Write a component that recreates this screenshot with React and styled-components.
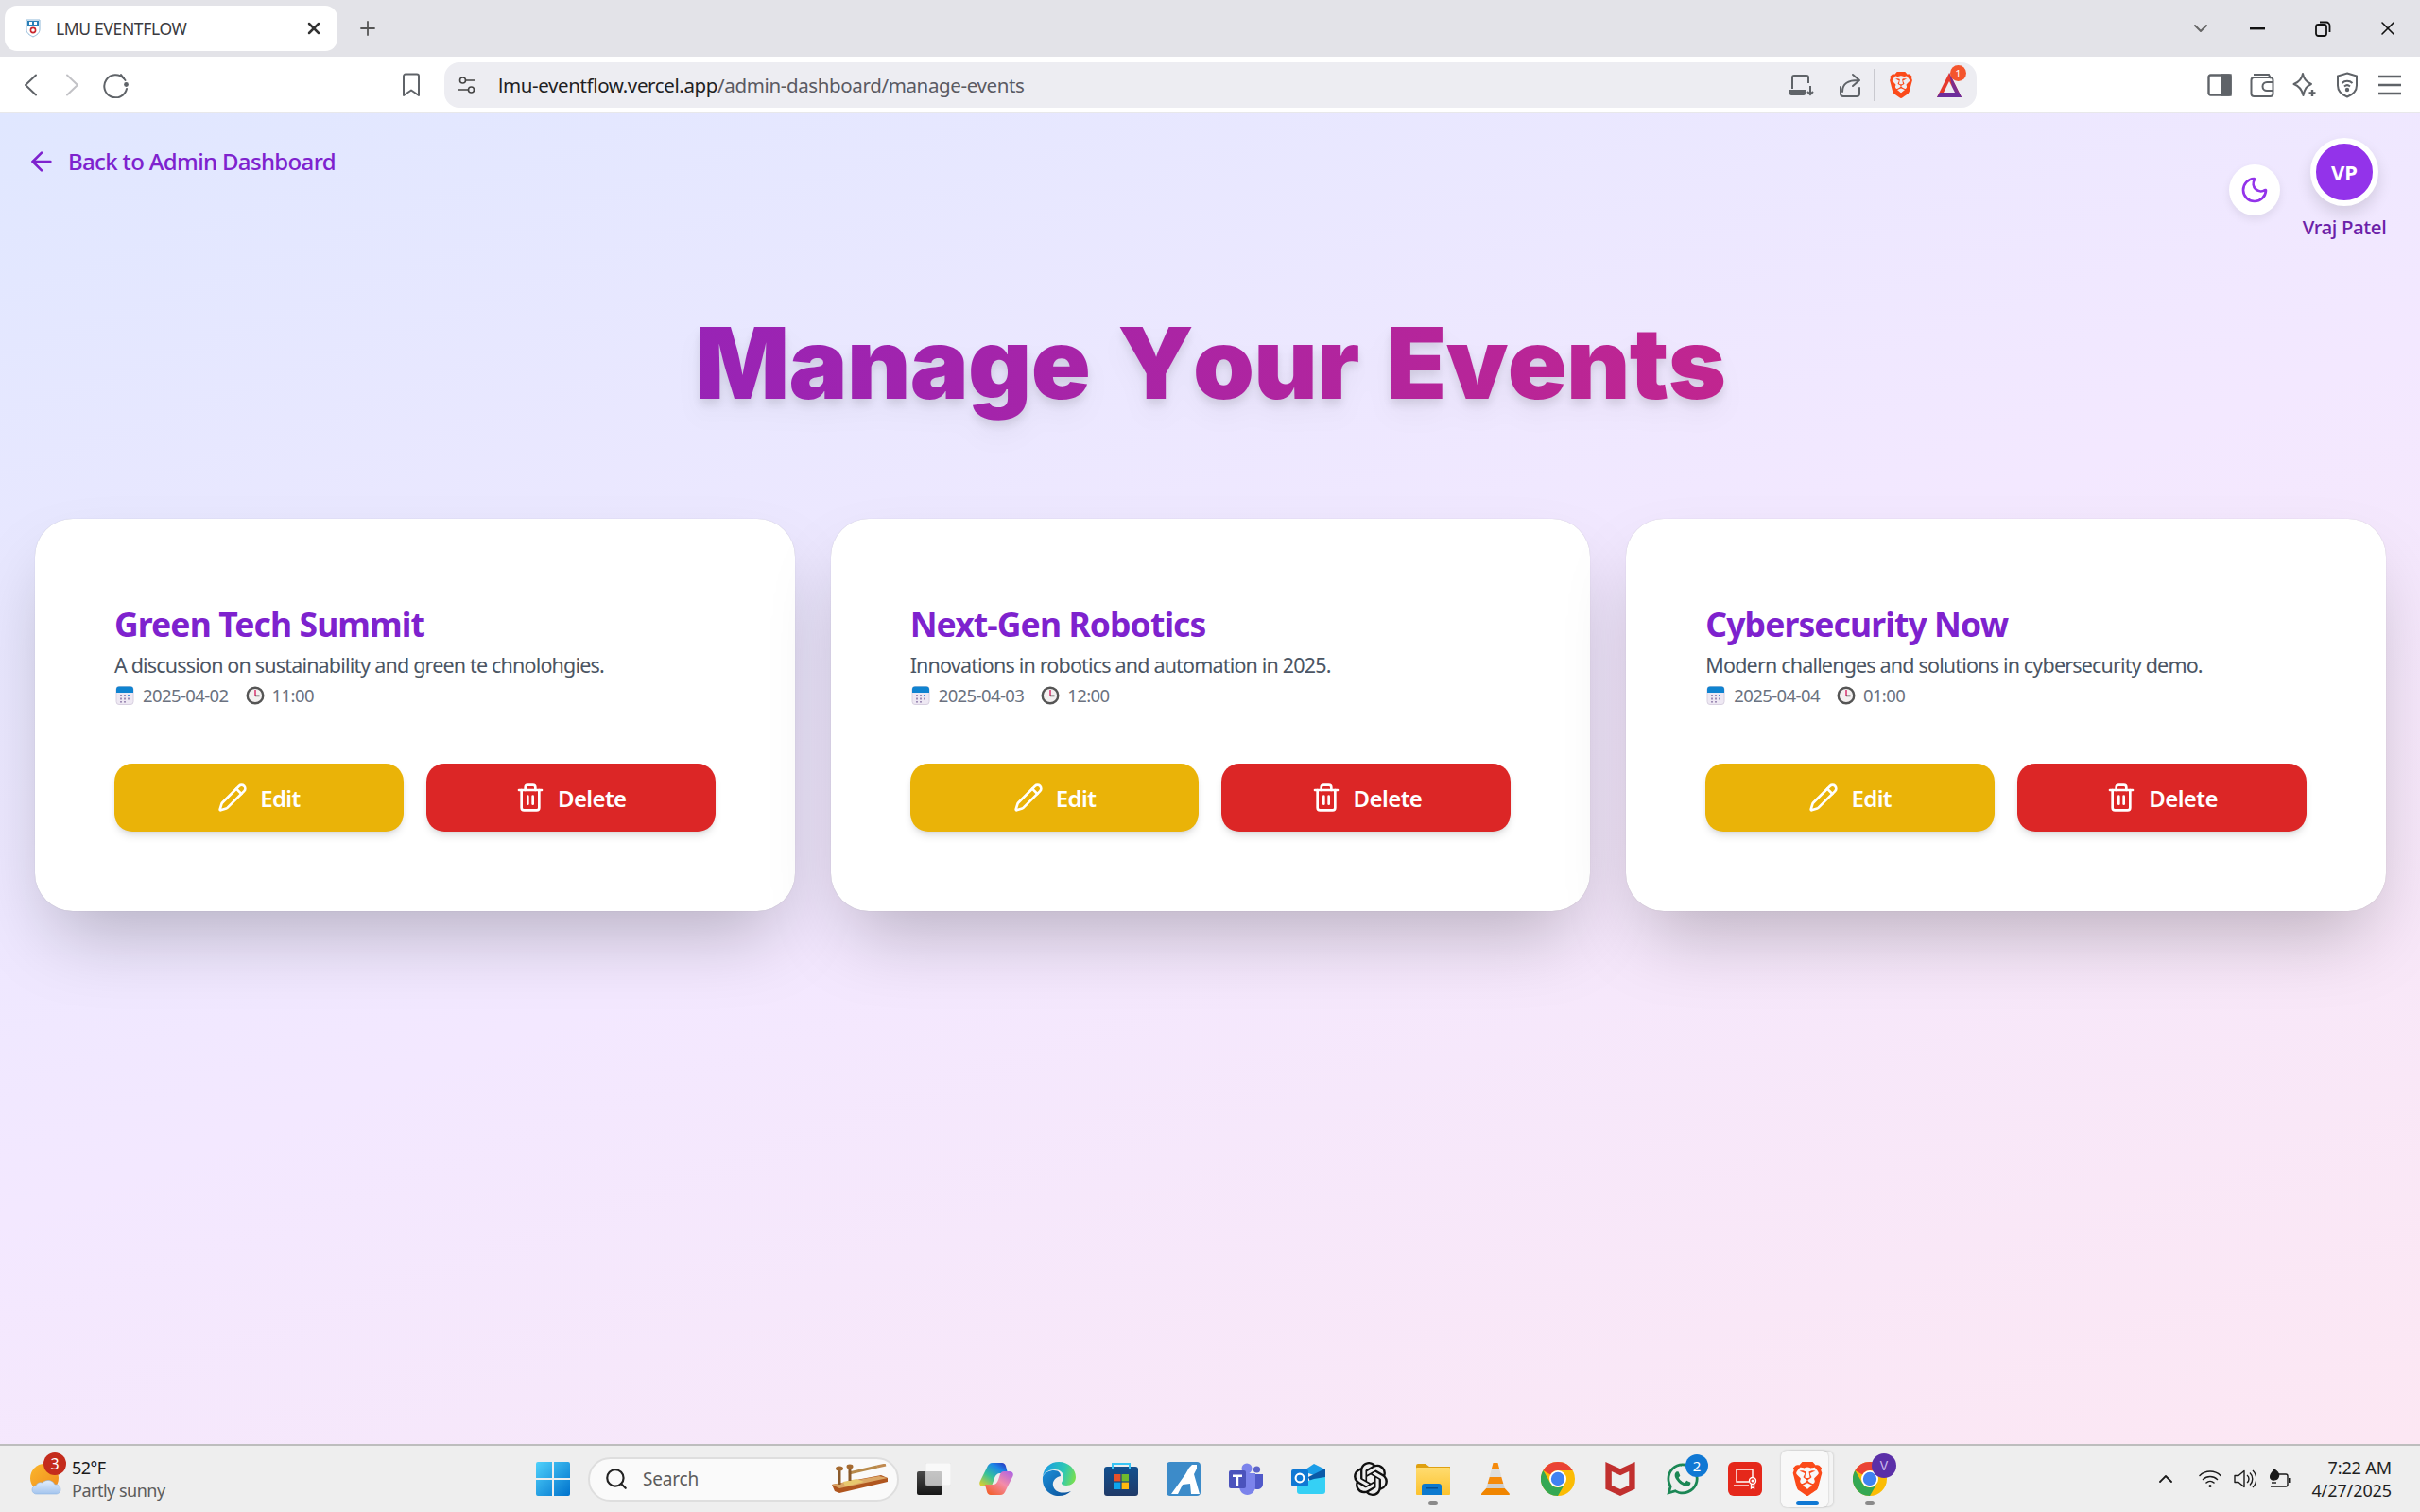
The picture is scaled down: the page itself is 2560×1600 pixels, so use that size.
import React from "react";
import styled, { createGlobalStyle } from "styled-components";
import { ArrowLeft, Moon, Pencil, Trash2, Plus, X, ChevronDown, ChevronUp, Search } from "lucide-react";
import { SiOpenai, SiBrave, SiMcafee } from "react-icons/si";
import { FaWhatsapp } from "react-icons/fa";

const Global = createGlobalStyle`
  html, body { margin: 0; padding: 0; height: 100%; }
  body { font-family: "Noto Sans", "Open Sans", sans-serif; }
  * { box-sizing: border-box; }
`;

const Shell = styled.div`
  width: 2560px; height: 1600px; display: flex; flex-direction: column; overflow: hidden;
`;

/* ---------- browser chrome ---------- */
const TabStrip = styled.div`
  height: 60px; background: #e3e3e8; display: flex; align-items: flex-start; padding: 6px 0 0 5px; color: #3c3c43;
`;
const Tab = styled.div`
  width: 352px; height: 48px; background: #fff; border-radius: 13px; display: flex; align-items: center; padding: 0 15px 0 22px;
`;
const TabTitle = styled.span`
  flex: 1; margin-left: 16px; font-size: 17.5px; color: #3a3a40; letter-spacing: -0.35px;
`;
const NewTab = styled.div`
  margin: 12px 0 0 20px; display: flex;
`;
const WindowControls = styled.div`
  margin-left: auto; display: flex; align-items: center; height: 48px; color: #111;
`;
const WinButton = styled.div`
  width: ${p => p.$w}px; display: flex; justify-content: center;
`;
const Toolbar = styled.div`
  height: 60px; background: #fff; display: flex; align-items: center; box-shadow: inset 0 -2px 0 #e8e8ea; color: #5f6368;
`;
const NavGroup = styled.div`
  width: 470px; flex: none; display: flex; align-items: center; padding-left: 25px;
`;
const NavBtn = styled.div`
  width: ${p => p.$w || 44}px; display: flex; justify-content: center; margin-left: ${p => p.$ml || 0}px;
`;
const UrlBar = styled.div`
  width: 1621px; height: 48px; border-radius: 16px; background: #ededf2; display: flex; align-items: center; padding: 0 14px 0 14px; position: relative;
`;
const UrlText = styled.div`
  margin-left: 23px; font-size: 20.5px; color: #1f1f24; flex: 1; letter-spacing: -0.37px;
`;
const UrlPath = styled.span`
  color: #5a5a62;
`;
const UrlIcons = styled.div`
  display: flex; align-items: center; color: #5f6368;
`;
const Divider = styled.div`
  width: 1px; height: 34px; background: #c9c9cf; margin: 0 14px 0 12px;
`;
const Badge = styled.span`
  position: absolute; top: ${p => p.$t}px; right: ${p => p.$r}px; width: ${p => p.$s}px; height: ${p => p.$s}px; border-radius: 50%;
  background: ${p => p.$bg}; color: ${p => p.$fg || "#fff"}; font-size: ${p => p.$f}px; display: flex; align-items: center; justify-content: center; line-height: 1;
`;
const IconWrap = styled.div`
  position: relative; display: flex; width: ${p => p.$w}px; justify-content: center; margin-left: ${p => p.$ml || 0}px;
`;
const ToolRight = styled.div`
  display: flex; align-items: center; margin-left: 234px;
`;
const ToolBtn = styled.div`
  width: 45px; display: flex; justify-content: center;
`;

/* ---------- page ---------- */
const Page = styled.main`
  flex: 1; background: linear-gradient(160deg, #e0e7ff, #f3e8ff 50%, #fce7f3); padding: 26px 36px 0 37px; min-height: 0;
`;
const TopRow = styled.div`
  display: flex; justify-content: space-between; align-items: flex-start;
`;
const BackLink = styled.a`
  display: flex; align-items: center; gap: 12px; margin: 6px 0 0 -9px; font-size: 24px; font-weight: 500; color: #7e22ce; letter-spacing: -0.65px; line-height: 38px;
`;
const UserArea = styled.div`
  display: flex; align-items: center; gap: 22px; margin-right: -2px;
`;
const ThemeBtn = styled.div`
  width: 54px; height: 54px; border-radius: 50%; background: #fff; display: flex; align-items: center; justify-content: center; color: #9333ea;
  box-shadow: 0 4px 10px rgba(0,0,0,.08);
`;
const UserBox = styled.div`
  display: flex; flex-direction: column; align-items: center; width: 92px;
`;
const Avatar = styled.div`
  width: 72px; height: 72px; border-radius: 50%; background: #9333ea; border: 6px solid #fff; color: #fff; font-weight: 700; font-size: 22px;
  display: flex; align-items: center; justify-content: center; box-shadow: 0 8px 16px rgba(0,0,0,.12);
`;
const UserName = styled.div`
  margin-top: 7px; font-size: 20.5px; font-weight: 500; color: #6b21a8; white-space: nowrap; line-height: 30px; letter-spacing: -0.4px;
`;
const Title = styled.h1`
  margin: 53px 0 0; text-align: center; font-family: "Inter", sans-serif; font-size: 104px; line-height: 152px; font-weight: 900; letter-spacing: -0.7px; word-spacing: 9px; font-kerning: none;
  background: linear-gradient(90deg, #7e22ce, #db2777); -webkit-background-clip: text; background-clip: text; color: transparent;
  filter: drop-shadow(0 16px 13px rgba(0,0,0,.04)) drop-shadow(0 6px 5px rgba(0,0,0,.1));
`;
const CardGrid = styled.div`
  margin-top: 89px; display: grid; grid-template-columns: repeat(3, 1fr); gap: 38px;
`;
const Card = styled.article`
  height: 415px; background: #fff; border-radius: 40px; padding: 84px 84px 0; box-shadow: 0 40px 80px -19px rgba(0,0,0,.25), 0 0 1px rgba(0,0,0,.2);
`;
const CardTitle = styled.h2`
  margin: 0; font-size: 35.5px; font-weight: 700; line-height: 54px; color: #7e22ce; letter-spacing: -0.9px;
`;
const CardDesc = styled.p`
  margin: 0; font-size: 21.5px; line-height: 34px; color: #4b5563; letter-spacing: -0.82px;
`;
const Meta = styled.div`
  display: flex; align-items: center; font-size: 18.5px; line-height: 28px; color: #6b7280; letter-spacing: -0.6px; margin-top: 1px;
`;
const MetaText = styled.span`
  margin: 0 ${p => p.$mr || 0}px 0 8px;
`;
const Actions = styled.div`
  margin-top: 58px; display: grid; grid-template-columns: 1fr 1fr; gap: 24px;
`;
const ActionBtn = styled.button`
  height: 72px; border: 0; border-radius: 19px; background: ${p => p.$bg}; color: #fff; font-family: inherit; font-size: 24px; font-weight: 600; letter-spacing: -0.6px;
  display: flex; align-items: center; justify-content: center; gap: 13px; box-shadow: 0 6px 10px -2px rgba(0,0,0,.12), 0 3px 6px -3px rgba(0,0,0,.1);
`;

/* ---------- taskbar ---------- */
const Taskbar = styled.footer`
  height: 72px; flex: none; background: #eeeeee; border-top: 2px solid #bdbdbd; display: flex; align-items: center; position: relative;
`;
const Weather = styled.div`
  width: 552px; flex: none; display: flex; align-items: center; padding-left: 32px; height: 100%;
`;
const WeatherIcon = styled.div`
  position: relative; width: 44px; height: 36px; flex: none;
`;
const WeatherText = styled.div`
  display: flex; flex-direction: column; font-size: 18px; line-height: 24px; color: #1a1a1a; letter-spacing: -0.5px;
`;
const WeatherSub = styled.span`
  color: #5c5c5c;
`;
const TaskGroup = styled.div`
  display: flex; align-items: center; height: 100%;
`;
const TaskItem = styled.div`
  position: relative; width: 66px; height: 100%; display: flex; align-items: center; justify-content: center; flex: none;
`;
const ActiveBack = styled.div`
  position: absolute; left: 5px; right: 11px; top: 5px; bottom: 5px; background: #f8f8f8; border-radius: 6px; box-shadow: 0 0 2px rgba(0,0,0,.25), 6px 0 0 -1px #f4f4f4, 6px 0 2px 0 rgba(0,0,0,.1);
`;
const RunDot = styled.span`
  position: absolute; bottom: 7px; left: 50%; transform: translateX(-50%); width: ${p => p.$w || 10}px; height: 5px; border-radius: 3px; background: ${p => p.$c || "#8a8a8a"};
`;
const SearchBox = styled.div`
  width: 329px; height: 47px; flex: none; margin: 0 4px; border-radius: 24px; background: #fafafa; border: 2px solid #dedede; display: flex; align-items: center; padding: 0 9px 0 15px;
  color: #5c5c5c; font-size: 19px; gap: 15px; letter-spacing: -0.2px;
`;
const SearchLabel = styled.span`
  flex: 1;
`;
const Tray = styled.div`
  margin-left: auto; display: flex; align-items: center; height: 100%; color: #1a1a1a; padding-right: 30px;
`;
const TrayItem = styled.div`
  width: ${p => p.$w}px; display: flex; justify-content: center; margin-left: ${p => p.$ml || 0}px;
`;
const Clock = styled.div`
  margin-left: 5px; width: 90px; text-align: right; font-size: 18px; line-height: 24px; color: #1f1f1f; letter-spacing: -0.1px;
`;

/* ---------- drawn icons ---------- */
const Favicon = () => (
  <svg width="16" height="20" viewBox="0 0 16 20"><path d="M1 1h14v10c0 4-3 6-7 8-4-2-7-4-7-8z" fill="#fff" stroke="#8fb8d8" /><rect x="2" y="2" width="12" height="6" fill="#2a7fb8" /><rect x="4" y="3" width="3" height="3" fill="#fff" /><rect x="9" y="3" width="3" height="3" fill="#fff" /><circle cx="8" cy="12" r="2.6" fill="none" stroke="#c9252c" strokeWidth="1.6" /></svg>
);
const Chevron = ({ dir, color }) => (
  <svg width="15" height="24" viewBox="0 0 15 24" fill="none" stroke={color} strokeWidth="2" strokeLinecap="round" strokeLinejoin="round"><path d={dir === "left" ? "M13 1.500L2 12l11 10.500" : "M2 1.500L13 12 2 22.500"} /></svg>
);
const Reload = () => (
  <svg width="27" height="27" viewBox="0 0 27 27" fill="none" stroke="#5f6368" strokeWidth="2" strokeLinecap="round"><path d="M22 6A12 12 0 1 0 25 17" /><circle cx="24.500" cy="12.500" r="2.400" fill="#5f6368" stroke="none" /><path d="M19 2l4.500 6" /></svg>
);
const Bookmark = () => (
  <svg width="20" height="26" viewBox="0 0 20 26" fill="none" stroke="#5f6368" strokeWidth="2" strokeLinejoin="round"><path d="M2 3.5a2 2 0 0 1 2-2h12a2 2 0 0 1 2 2V24l-8-5.5L2 24z" /></svg>
);
const Sliders = () => (
  <svg width="20" height="20" viewBox="0 0 20 20" fill="none" stroke="#444" strokeWidth="1.6"><circle cx="5.5" cy="5" r="3" /><path d="M9 5h10M1 15h10" /><circle cx="14.5" cy="15" r="3" /></svg>
);
const InstallIcon = () => (
  <svg width="26" height="24" viewBox="0 0 26 24" fill="none" stroke="#5f6368" strokeWidth="2"><path d="M3 16V4a2 2 0 0 1 2-2h13a2 2 0 0 1 2 2v6" /><path d="M1 18h15v3a1 1 0 0 1-1 1H2a1 1 0 0 1-1-1z" fill="#5f6368" /><path d="M22 13v9M19 19l3 3 3-3" /></svg>
);
const ShareIcon = () => (
  <svg width="24" height="26" viewBox="0 0 24 26" fill="none" stroke="#5f6368" strokeWidth="2" strokeLinecap="round" strokeLinejoin="round"><path d="M22 16v6a3 3 0 0 1-3 3H5a3 3 0 0 1-3-3v-7" /><path d="M4 20c0-9 6-12 17-12M15 2l7 6-7 6" /></svg>
);
const BraveTri = () => (
  <svg width="28" height="28" viewBox="0 0 28 28"><path d="M14 1L1 27h26z" fill="#e63a2e" /><path d="M14 1l13 26h-8z" fill="#7b2d8e" /><path d="M14 10L7 24h14z" fill="#ededf2" /><path d="M4 22h20l3 5H1z" fill="#6c2d9c" /></svg>
);
const SidebarIcon = () => (
  <svg width="26" height="24" viewBox="0 0 26 24" fill="none" stroke="#5f6368" strokeWidth="2.4"><rect x="1.5" y="1.5" width="23" height="21" rx="2" /><rect x="16" y="1.5" width="8.5" height="21" fill="#5f6368" /></svg>
);
const WalletIcon = () => (
  <svg width="26" height="26" viewBox="0 0 26 26" fill="none" stroke="#5f6368" strokeWidth="2"><path d="M4 2h16l2 4" /><rect x="1.5" y="5" width="23" height="20" rx="3" /><path d="M25 10h-7a3.5 3.5 0 0 0 0 9h7" /></svg>
);
const LeoIcon = () => (
  <svg width="28" height="28" viewBox="0 0 28 28" fill="none" stroke="#5f6368" strokeWidth="2" strokeLinejoin="round"><path d="M12 2c1 6 4 9 9 11-5 2-7 5-8.500 12C11 18 8 15 2.500 13 8 11 11 8 12 2z" /><path d="M22 19v7M18.500 22.500h7" strokeWidth="2.400" /></svg>
);
const VpnIcon = () => (
  <svg width="24" height="28" viewBox="0 0 24 28" fill="none" stroke="#5f6368" strokeWidth="2"><path d="M12 1.500l10 3v10c0 6-5 10-10 12-5-2-10-6-10-12v-10z" /><path d="M6.500 12a8 8 0 0 1 11 0M9 15.500a4.500 4.500 0 0 1 6 0" /><circle cx="12" cy="19" r="1.200" fill="#5f6368" /></svg>
);
const MenuIcon = () => (
  <svg width="26" height="22" viewBox="0 0 26 22" stroke="#5f6368" strokeWidth="2.400"><path d="M1 2h24M1 11h24M1 20h24" /></svg>
);
const RestoreIcon = () => (
  <svg width="17" height="17" viewBox="0 0 17 17" fill="none" stroke="#111" strokeWidth="1.800"><rect x="1" y="4" width="11" height="12" rx="2.500" /><path d="M5 1.500h7a3.500 3.500 0 0 1 3.500 3.500v7" /></svg>
);
const MinIcon = () => (
  <svg width="16" height="4" viewBox="0 0 16 4"><rect width="16" height="2.400" y="1" fill="#111" /></svg>
);
const Calendar = () => (
  <svg width="22" height="22" viewBox="0 0 22 22"><rect x="2" y="1.500" width="18" height="19" rx="3" fill="#eee8f3" stroke="#d8d0e0" /><path d="M2 8V4.500a3 3 0 0 1 3-3h12a3 3 0 0 1 3 3V8z" fill="#0f83d0" /><g fill="#9d8bb5"><rect x="6" y="10" width="2" height="2" /><rect x="10" y="10" width="2" height="2" /><rect x="14" y="10" width="2" height="2" fill="#4a90d9" /><rect x="6" y="13.500" width="2" height="2" /><rect x="10" y="13.500" width="2" height="2" /><rect x="14" y="13.500" width="2" height="2" /><rect x="6" y="17" width="2" height="1.600" /><rect x="10" y="17" width="2" height="1.600" /></g></svg>
);
const ClockEmoji = () => (
  <svg width="20" height="20" viewBox="0 0 20 20"><circle cx="10" cy="10" r="8.300" fill="#f3f0f0" stroke="#555" strokeWidth="2.400" /><path d="M10 4v6" stroke="#d8336f" strokeWidth="1.500" /><path d="M10 10.400h4.500" stroke="#222" strokeWidth="1.500" /></svg>
);

const WeatherArt = () => (
  <svg width="34" height="36" viewBox="0 0 34 36"><defs><linearGradient id="sun" x1="0" y1="0" x2="1" y2="1"><stop offset="0" stopColor="#fbb72c" /><stop offset="1" stopColor="#ef8a1e" /></linearGradient><linearGradient id="cl" x1="0" y1="0" x2="0" y2="1"><stop offset="0" stopColor="#e3eefb" /><stop offset="1" stopColor="#a3c4ee" /></linearGradient></defs><circle cx="15" cy="17" r="15" fill="url(#sun)" /><path d="M7 34a4.500 4.500 0 0 1-1-9 6 6 0 0 1 7-3 8 8 0 0 1 13 2 5 5 0 0 1 6 5 5 5 0 0 1-4 5z" fill="url(#cl)" stroke="#8fb5e3" strokeWidth=".6" /></svg>
);
const StartIcon = () => (
  <svg width="36" height="36" viewBox="0 0 36 36"><defs><linearGradient id="st" x1="0" y1="0" x2="1" y2="1"><stop offset="0" stopColor="#4fd1fb" /><stop offset="1" stopColor="#0072cc" /></linearGradient></defs><path d="M0 2a2 2 0 0 1 2-2h15v17H0zM19 0h15a2 2 0 0 1 2 2v15H19zM0 19h17v17H2a2 2 0 0 1-2-2zM19 19h17v15a2 2 0 0 1-2 2H19z" fill="url(#st)" /></svg>
);
const SearchArt = () => (
  <svg width="60" height="32" viewBox="0 0 60 32"><path d="M0 22l52-10 7 3v4L8 31l-5-2z" fill="#b0561f" /><path d="M0 22l50-9 9 2-51 11z" fill="#dba766" /><path d="M14 24l20-5-8-3-14 3z" fill="#e8c96e" /><path d="M18 10l30-7" stroke="#b88a4a" strokeWidth="3" fill="none" /><path d="M8 6v16M19 4v14" stroke="#8a5a2b" strokeWidth="3" fill="none" /><ellipse cx="8" cy="5" rx="4" ry="2.500" fill="#a56a30" /><ellipse cx="19" cy="3" rx="3.500" ry="2.400" fill="#a56a30" /><path d="M48 3l9-2" stroke="#c08a50" strokeWidth="3" /></svg>
);
const TaskViewIcon = () => (
  <svg width="36" height="34" viewBox="0 0 36 34"><defs><linearGradient id="tv" x1="0" y1="0" x2="0" y2="1"><stop offset="0" stopColor="#4a4a4a" /><stop offset="1" stopColor="#161616" /></linearGradient></defs><rect x="0" y="9" width="27" height="25" rx="2" fill="url(#tv)" /><rect x="9" y="0" width="27" height="24" rx="2" fill="#fff" opacity=".68" stroke="#ddd" strokeWidth=".6" /></svg>
);
const CopilotIcon = () => (
  <svg width="36" height="34" viewBox="0 0 36 34"><defs><linearGradient id="co1" x1="0" y1="1" x2=".8" y2="0"><stop offset="0" stopColor="#f5d020" /><stop offset=".45" stopColor="#35c29a" /><stop offset=".8" stopColor="#1b86e8" /><stop offset="1" stopColor="#2746c8" /></linearGradient><linearGradient id="co2" x1=".2" y1="1" x2="1" y2="0"><stop offset="0" stopColor="#f2602f" /><stop offset=".5" stopColor="#f48ca8" /><stop offset="1" stopColor="#a860e8" /></linearGradient></defs><path d="M14 0h10c2 0 3.500 1.500 4 3.500L30 11h-8c-3 0-5 2-6 5l-2 6c-1 2-2 3-4 3H4c-3 0-4.500-2-3.500-5L8 5c1-3 3-5 6-5z" fill="url(#co1)" /><path d="M22 34H12c-2 0-3.500-1.500-4-3.500L6 23h8c3 0 5-2 6-5l2-6c1-2 2-3 4-3h6c3 0 4.500 2 3.500 5L28 29c-1 3-3 5-6 5z" fill="url(#co2)" /></svg>
);
const EdgeIcon = () => (
  <svg width="36" height="36" viewBox="0 0 36 36"><defs><linearGradient id="ed1" x1="0" y1=".5" x2="1" y2=".7"><stop offset="0" stopColor="#1b9de2" /><stop offset=".6" stopColor="#2dc8b4" /><stop offset="1" stopColor="#7de04a" /></linearGradient><linearGradient id="ed2" x1="0" y1="0" x2="1" y2="1"><stop offset="0" stopColor="#1b8fd8" /><stop offset="1" stopColor="#0c4f98" /></linearGradient></defs><path d="M1 16C2 6 9 0 18 0c11 0 18 8 18 16 0 6-5 9-10 9-3 0-5-1-5-2.500 0-1.500 2-2.500 2-6.500 0-5-4-8-9-8-6 0-12 3-13 8z" fill="url(#ed1)" /><path d="M1 16c2-5 7-7 12-7s7 3 7 6c-5 1-9 5-8 10 1 6 8 10 19 6-3 3-8 5-13 5C8 36 0 28 1 16z" fill="url(#ed2)" /></svg>
);
const StoreIcon = () => (
  <svg width="36" height="36" viewBox="0 0 36 36"><defs><linearGradient id="sb" x1="0" y1="0" x2="0" y2="1"><stop offset="0" stopColor="#12508f" /><stop offset="1" stopColor="#203a68" /></linearGradient></defs><rect y="5" width="36" height="31" rx="3" fill="url(#sb)" /><path d="M9 8V2h18v6" fill="none" stroke="#38c4f4" strokeWidth="2" /><rect x="10" y="13" width="7.400" height="7.400" fill="#e8512a" /><rect x="18.600" y="13" width="7.400" height="7.400" fill="#6fb92d" /><rect x="10" y="21.600" width="7.400" height="7.400" fill="#0ea5ee" /><rect x="18.600" y="21.600" width="7.400" height="7.400" fill="#fdb90f" /></svg>
);
const AppAIcon = () => (
  <svg width="36" height="36" viewBox="0 0 36 36"><rect width="36" height="36" rx="4" fill="#3c8bc9" /><path d="M5 34L20 13l4-7 3-3h5v4l-3 6 6 21H26l-1-11-8 1-5 10z" fill="#fff" /></svg>
);
const TeamsIcon = () => (
  <svg width="36" height="34" viewBox="0 0 36 34"><circle cx="29.500" cy="7" r="3.600" fill="#5b62c8" /><circle cx="19" cy="6" r="5.500" fill="#7b83eb" /><path d="M24 12h12v10c0 4-3 6-6 6s-6-2-6-6z" fill="#5059c9" /><path d="M11 11h17v14c0 5-4 9-8.500 9S11 30 11 25z" fill="#7b83eb" /><rect y="8" width="18" height="19" rx="2" fill="#4b53bc" /><path d="M4 12.500h10v2.400h-3.800V24H7.800v-9.100H4z" fill="#fff" /></svg>
);
const OutlookIcon = () => (
  <svg width="36" height="32" viewBox="0 0 36 32"><path d="M12 8L24 0l12 6v10z" fill="#1a9de8" /><path d="M18 14L36 5v9L22 24z" fill="#0a5aa8" /><path d="M6 22l18-6 12-2v15a3 3 0 0 1-3 3H9a3 3 0 0 1-3-3z" fill="#35d0f5" /><rect y="6" width="18" height="18" rx="2" fill="#0f78d4" /><circle cx="9" cy="15" r="4.400" fill="none" stroke="#fff" strokeWidth="2.100" /></svg>
);
const FolderIcon = () => (
  <svg width="36" height="33" viewBox="0 0 36 33"><defs><linearGradient id="fo" x1="0" y1="0" x2="0" y2="1"><stop offset="0" stopColor="#ffdc70" /><stop offset="1" stopColor="#fcc22e" /></linearGradient></defs><path d="M0 6V2a2 2 0 0 1 2-2h8l4 3h22v3z" fill="#dfa010" /><rect y="4" width="36" height="29" rx="1" fill="url(#fo)" /><path d="M6 33V24a3 3 0 0 1 3-3h15a3 3 0 0 1 3 3v9z" fill="#0c79cf" /><rect x="10" y="25" width="13" height="1.500" fill="#084f8f" /></svg>
);
const VlcIcon = () => (
  <svg width="30" height="34" viewBox="0 0 30 34"><path d="M12.500 0h5l1.800 7h-8.600z" fill="#f58a0b" /><path d="M10.700 7h8.600l2 8H8.700z" fill="#dedede" /><path d="M8.700 15h12.600l2 7H6.700z" fill="#f58a0b" /><path d="M6.700 22h16.600l1.500 5H5.200z" fill="#cfcfcf" /><path d="M5.200 27h19.600l5 5.500V34H0v-1.500z" fill="#f08500" /></svg>
);
const ChromeIcon = () => (
  <svg width="36" height="36" viewBox="0 0 36 36"><circle cx="18" cy="18" r="18" fill="#fbbc04" /><path d="M2.410 9A18 18 0 0 1 33.590 9H18a9 9 0 0 0-7.800 4.500z" fill="#ea4335" /><path d="M2.410 9A18 18 0 0 0 18 36l7.800-13.500A9 9 0 0 1 10.200 22.500z" fill="#34a853" /><circle cx="18" cy="18" r="9" fill="#fff" /><circle cx="18" cy="18" r="7.200" fill="#3f82f1" /></svg>
);
const RedApp = () => (
  <svg width="36" height="36" viewBox="0 0 36 36"><rect width="36" height="36" rx="6" fill="#e5281b" /><g fill="none" stroke="#fff" strokeWidth="1.400"><path d="M22 21H9V8h17v8" /><path d="M6 25h16" /><circle cx="26" cy="20" r="3.500" /><path d="M24.500 23.500V28l1.500-1 1.500 1v-4.500" /></g><circle cx="26" cy="20" r="1.500" fill="#fff" /></svg>
);
const BraveMark = ({ size }) => (
  <SiBrave size={size} color="#fb4a1a" />
);
const Wifi = () => (
  <svg width="24" height="20" viewBox="0 0 24 20" fill="none" stroke="#1a1a1a" strokeWidth="1.500" strokeLinecap="round"><path d="M1 6.500a16 16 0 0 1 22 0M4.500 10.500a11 11 0 0 1 15 0M8 14a6 6 0 0 1 8 0" /><circle cx="12" cy="17.500" r="1.500" fill="#1a1a1a" stroke="none" /></svg>
);
const Speaker = () => (
  <svg width="24" height="22" viewBox="0 0 24 22" fill="none" stroke="#1a1a1a" strokeWidth="1.400" strokeLinejoin="round"><path d="M1 7.500h4l6-5v17l-6-5H1z" /><path d="M14 7a5 5 0 0 1 0 8M17 4.500a9 9 0 0 1 0 13M20 2a12.500 12.500 0 0 1 0 18" /></svg>
);
const Battery = () => (
  <svg width="24" height="22" viewBox="0 0 24 22" fill="none" stroke="#1a1a1a" strokeWidth="1.400"><path d="M8 6h10a2 2 0 0 1 2 2v9a2 2 0 0 1-2 2H2" /><rect x="21" y="10" width="2.500" height="5" fill="#1a1a1a" stroke="none" /><path d="M6 1c3 2 5 4 4.500 7-.5 3-3 4-5.500 4S1 10 2 7 5 3 6 1z" fill="#1a1a1a" /><path d="M3 15h5" /></svg>
);

const events = [
  { title: "Green Tech Summit", desc: "A discussion on sustainability and green te chnolohgies.", date: "2025-04-02", time: "11:00" },
  { title: "Next-Gen Robotics", desc: "Innovations in robotics and automation in 2025.", date: "2025-04-03", time: "12:00" },
  { title: "Cybersecurity Now", desc: "Modern challenges and solutions in cybersecurity demo.", date: "2025-04-04", time: "01:00" },
];

export default function App() {
  return (
    <Shell>
      <Global />
      <TabStrip>
        <Tab>
          <Favicon />
          <TabTitle>LMU EVENTFLOW</TabTitle>
          <X size={20} strokeWidth={3} color="#333" />
        </Tab>
        <NewTab><Plus size={24} strokeWidth={1.8} color="#555" /></NewTab>
        <WindowControls>
          <WinButton $w={52}><ChevronDown size={24} color="#666" strokeWidth={2} /></WinButton>
          <WinButton $w={68}><MinIcon /></WinButton>
          <WinButton $w={70}><RestoreIcon /></WinButton>
          <WinButton $w={68}><X size={24} strokeWidth={1.6} /></WinButton>
        </WindowControls>
      </TabStrip>
      <Toolbar>
        <NavGroup>
          <NavBtn $w={15}><Chevron dir="left" color="#5f6368" /></NavBtn>
          <NavBtn $ml={29} $w={15}><Chevron dir="right" color="#c2c2c6" /></NavBtn>
          <NavBtn $ml={25} $w={27}><Reload /></NavBtn>
          <NavBtn $ml={289} $w={20}><Bookmark /></NavBtn>
        </NavGroup>
        <UrlBar>
          <Sliders />
          <UrlText>lmu-eventflow.vercel.app<UrlPath>/admin-dashboard/manage-events</UrlPath></UrlText>
          <UrlIcons>
            <IconWrap $w={30}><InstallIcon /></IconWrap>
            <IconWrap $w={26} $ml={23}><ShareIcon /></IconWrap>
            <Divider />
            <IconWrap $w={28}><BraveMark size={28} /></IconWrap>
            <IconWrap $w={30} $ml={22}>
              <BraveTri />
              <Badge $t={-7} $r={-3} $s={17} $bg="#f4552d" $f={11}>1</Badge>
            </IconWrap>
          </UrlIcons>
        </UrlBar>
        <ToolRight>
          <ToolBtn><SidebarIcon /></ToolBtn>
          <ToolBtn><WalletIcon /></ToolBtn>
          <ToolBtn><LeoIcon /></ToolBtn>
          <ToolBtn><VpnIcon /></ToolBtn>
          <ToolBtn><MenuIcon /></ToolBtn>
        </ToolRight>
      </Toolbar>
      <Page>
        <TopRow>
          <BackLink><ArrowLeft size={32} strokeWidth={2} />Back to Admin Dashboard</BackLink>
          <UserArea>
            <ThemeBtn><Moon size={32} strokeWidth={2} /></ThemeBtn>
            <UserBox>
              <Avatar>VP</Avatar>
              <UserName>Vraj Patel</UserName>
            </UserBox>
          </UserArea>
        </TopRow>
        <Title>Manage Your Events</Title>
        <CardGrid>
          {events.map(e => (
            <Card key={e.title}>
              <CardTitle>{e.title}</CardTitle>
              <CardDesc>{e.desc}</CardDesc>
              <Meta>
                <Calendar /><MetaText $mr={18}>{e.date}</MetaText>
                <ClockEmoji /><MetaText>{e.time}</MetaText>
              </Meta>
              <Actions>
                <ActionBtn $bg="#eab308"><Pencil size={32} strokeWidth={2} />Edit</ActionBtn>
                <ActionBtn $bg="#dc2626"><Trash2 size={32} strokeWidth={2} />Delete</ActionBtn>
              </Actions>
            </Card>
          ))}
        </CardGrid>
      </Page>
      <Taskbar>
        <Weather>
          <WeatherIcon>
            <WeatherArt />
            <Badge $t={-10} $r={6} $s={24} $bg="#c42b1c" $f={16}>3</Badge>
          </WeatherIcon>
          <WeatherText>52°F<WeatherSub>Partly sunny</WeatherSub></WeatherText>
        </Weather>
        <TaskGroup>
          <TaskItem><StartIcon /></TaskItem>
          <SearchBox><Search size={26} color="#222" strokeWidth={2} /><SearchLabel>Search</SearchLabel><SearchArt /></SearchBox>
          <TaskItem><TaskViewIcon /></TaskItem>
          <TaskItem><CopilotIcon /></TaskItem>
          <TaskItem><EdgeIcon /></TaskItem>
          <TaskItem><StoreIcon /></TaskItem>
          <TaskItem><AppAIcon /></TaskItem>
          <TaskItem><TeamsIcon /></TaskItem>
          <TaskItem><OutlookIcon /></TaskItem>
          <TaskItem><SiOpenai size={36} color="#111" /></TaskItem>
          <TaskItem><FolderIcon /><RunDot /></TaskItem>
          <TaskItem><VlcIcon /></TaskItem>
          <TaskItem><ChromeIcon /></TaskItem>
          <TaskItem><SiMcafee size={36} color="#c1302f" /></TaskItem>
          <TaskItem><FaWhatsapp size={38} color="#1b8755" /><Badge $t={9} $r={6} $s={24} $bg="#0f78d4" $f={15}>2</Badge></TaskItem>
          <TaskItem><RedApp /></TaskItem>
          <TaskItem><ActiveBack /><IconWrap $w={38}><BraveMark size={36} /></IconWrap><RunDot $w={24} $c="#0f78d4" /></TaskItem>
          <TaskItem><ChromeIcon /><Badge $t={8} $r={5} $s={26} $bg="#5b2fa8" $fg="#c9b8ee" $f={14}>V</Badge><RunDot /></TaskItem>
        </TaskGroup>
        <Tray>
          <TrayItem $w={34}><ChevronUp size={24} strokeWidth={1.8} /></TrayItem>
          <TrayItem $w={46} $ml={7}><Wifi /></TrayItem>
          <TrayItem $w={28}><Speaker /></TrayItem>
          <TrayItem $w={46}><Battery /></TrayItem>
          <Clock>7:22 AM<br />4/27/2025</Clock>
        </Tray>
      </Taskbar>
    </Shell>
  );
}
